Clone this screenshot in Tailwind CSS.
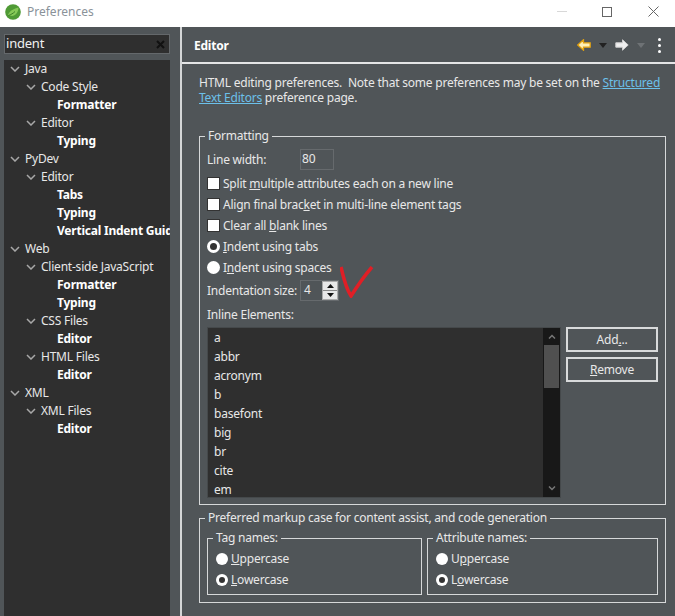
<!DOCTYPE html>
<html lang="en">
<head>
    <meta charset="UTF-8" />
    <title>Preferences</title>
    <script src="https://cdn.jsdelivr.net/npm/@tailwindcss/browser@4"></script>
</head>
<body class="w-[675px] h-[616px] overflow-hidden bg-[#505558] font-['Noto_Sans','Open_Sans',sans-serif] text-[12px] tracking-[-0.22px] text-[#e8e8e8]">

<!-- title bar -->
<header class="h-[27px] bg-white flex items-center pb-[4px]">
    <svg class="ml-[5px] w-4 h-4" viewBox="0 0 16 16">
        <circle cx="8" cy="8" r="7.8" fill="#4f9a35"/>
        <path d="M3 11 C5 6 9 5 13.5 3.5 C13.5 9 9 13.5 5 11.5 Z" fill="#86c957"/>
        <path d="M3.5 11.5 C6 10.5 8 9.5 10 7.5" stroke="#3c7f28" fill="none"/>
    </svg>
    <span class="ml-[6px] text-[#8a9299] tracking-normal">Preferences</span>
    <div class="ml-auto flex items-center">
        <span class="w-[10px] h-px bg-[#d8d8d8] mr-[35px]"></span>
        <span class="w-[10px] h-[10px] border border-[#666] mr-[36px]"></span>
        <svg class="w-[11px] h-[11px] mr-[16px]" viewBox="0 0 11 11"><path d="M.5 .5 10.5 10.5M10.5 .5 .5 10.5" stroke="#666" fill="none"/></svg>
    </div>
</header>

<div class="flex h-[589px]">
    <!-- left: filter and tree -->
    <aside class="w-[180px] shrink-0 pl-1 pr-[10px] pt-[7px]">
        <div class="h-[20px] border border-[#64686b] bg-[#2f2f2f] flex items-center pl-[1px] pr-[4px] text-[13px] text-[#f0f0f0]">
            <span>indent</span>
            <svg class="ml-auto w-[9px] h-[9px]" viewBox="0 0 9 9"><path d="M1 1 8 8M8 1 1 8" stroke="#111" stroke-width="2" fill="none"/></svg>
        </div>
        <div class="mt-[6px] h-[556px] bg-[#2f2f2f] overflow-hidden whitespace-nowrap">
            <div class="h-[18px] flex items-center pl-[6px] gap-[5px]"><svg class="w-[10px] h-[6px] shrink-0" viewBox="0 0 10 6"><path d="M1 1 5 5 9 1" stroke="#a8a8a8" stroke-width="1.5" fill="none"/></svg>Java</div>
            <div class="h-[18px] flex items-center pl-[22px] gap-[5px]"><svg class="w-[10px] h-[6px] shrink-0" viewBox="0 0 10 6"><path d="M1 1 5 5 9 1" stroke="#a8a8a8" stroke-width="1.5" fill="none"/></svg>Code Style</div>
            <div class="h-[18px] flex items-center pl-[53px] font-bold text-white">Formatter</div>
            <div class="h-[18px] flex items-center pl-[22px] gap-[5px]"><svg class="w-[10px] h-[6px] shrink-0" viewBox="0 0 10 6"><path d="M1 1 5 5 9 1" stroke="#a8a8a8" stroke-width="1.5" fill="none"/></svg>Editor</div>
            <div class="h-[18px] flex items-center pl-[53px] font-bold text-white">Typing</div>
            <div class="h-[18px] flex items-center pl-[6px] gap-[5px]"><svg class="w-[10px] h-[6px] shrink-0" viewBox="0 0 10 6"><path d="M1 1 5 5 9 1" stroke="#a8a8a8" stroke-width="1.5" fill="none"/></svg>PyDev</div>
            <div class="h-[18px] flex items-center pl-[22px] gap-[5px]"><svg class="w-[10px] h-[6px] shrink-0" viewBox="0 0 10 6"><path d="M1 1 5 5 9 1" stroke="#a8a8a8" stroke-width="1.5" fill="none"/></svg>Editor</div>
            <div class="h-[18px] flex items-center pl-[53px] font-bold text-white">Tabs</div>
            <div class="h-[18px] flex items-center pl-[53px] font-bold text-white">Typing</div>
            <div class="h-[18px] flex items-center pl-[53px] font-bold text-white">Vertical Indent Guides</div>
            <div class="h-[18px] flex items-center pl-[6px] gap-[5px]"><svg class="w-[10px] h-[6px] shrink-0" viewBox="0 0 10 6"><path d="M1 1 5 5 9 1" stroke="#a8a8a8" stroke-width="1.5" fill="none"/></svg>Web</div>
            <div class="h-[18px] flex items-center pl-[22px] gap-[5px]"><svg class="w-[10px] h-[6px] shrink-0" viewBox="0 0 10 6"><path d="M1 1 5 5 9 1" stroke="#a8a8a8" stroke-width="1.5" fill="none"/></svg>Client-side JavaScript</div>
            <div class="h-[18px] flex items-center pl-[53px] font-bold text-white">Formatter</div>
            <div class="h-[18px] flex items-center pl-[53px] font-bold text-white">Typing</div>
            <div class="h-[18px] flex items-center pl-[22px] gap-[5px]"><svg class="w-[10px] h-[6px] shrink-0" viewBox="0 0 10 6"><path d="M1 1 5 5 9 1" stroke="#a8a8a8" stroke-width="1.5" fill="none"/></svg>CSS Files</div>
            <div class="h-[18px] flex items-center pl-[53px] font-bold text-white">Editor</div>
            <div class="h-[18px] flex items-center pl-[22px] gap-[5px]"><svg class="w-[10px] h-[6px] shrink-0" viewBox="0 0 10 6"><path d="M1 1 5 5 9 1" stroke="#a8a8a8" stroke-width="1.5" fill="none"/></svg>HTML Files</div>
            <div class="h-[18px] flex items-center pl-[53px] font-bold text-white">Editor</div>
            <div class="h-[18px] flex items-center pl-[6px] gap-[5px]"><svg class="w-[10px] h-[6px] shrink-0" viewBox="0 0 10 6"><path d="M1 1 5 5 9 1" stroke="#a8a8a8" stroke-width="1.5" fill="none"/></svg>XML</div>
            <div class="h-[18px] flex items-center pl-[22px] gap-[5px]"><svg class="w-[10px] h-[6px] shrink-0" viewBox="0 0 10 6"><path d="M1 1 5 5 9 1" stroke="#a8a8a8" stroke-width="1.5" fill="none"/></svg>XML Files</div>
            <div class="h-[18px] flex items-center pl-[53px] font-bold text-white">Editor</div>
        </div>
    </aside>

    <!-- sash -->
    <div class="w-[2px] shrink-0 bg-[#d4d6d7]"></div>

    <!-- right: page -->
    <main class="relative flex-1 min-w-0">
        <div class="h-[35px] pt-[1px] flex items-center pl-3 pr-[14px]">
            <span class="mt-[2px] font-bold text-white">Editor</span>
            <svg class="ml-auto w-[14px] h-[12px]" viewBox="0 0 14 12"><path d="M6.5 .8 .8 6 6.5 11.2V8.2H13.2V3.8H6.5Z" fill="#fff0b8" stroke="#e0a010" stroke-width="1.3"/></svg>
            <svg class="ml-[8px] w-[8px] h-[5px]" viewBox="0 0 8 5"><path d="M0 0H8L4 5Z" fill="#222"/></svg>
            <svg class="ml-[8px] w-[14px] h-[12px]" viewBox="0 0 14 12"><path d="M7.5 .8 13.2 6 7.5 11.2V8.2H.8V3.8H7.5Z" fill="#f0f0f0" stroke="#d0d0d0" stroke-width="1"/></svg>
            <svg class="ml-[8px] w-[8px] h-[5px]" viewBox="0 0 8 5"><path d="M0 0H8L4 5Z" fill="#6e7275"/></svg>
            <span class="ml-[13px] flex flex-col gap-[3px]">
                <span class="w-[3px] h-[3px] rounded-full bg-white"></span>
                <span class="w-[3px] h-[3px] rounded-full bg-white"></span>
                <span class="w-[3px] h-[3px] rounded-full bg-white"></span>
            </span>
        </div>
        <div class="h-[2px] bg-[#e4e5e6]"></div>

        <div class="pl-[17px] pr-[9px]">
            <p class="pt-[11px] leading-[15px] h-[64px]">HTML editing preferences.&nbsp; Note that some preferences may be set on the <a class="text-[#6cc0ea] underline">Structured Text Editors</a> preference page.</p>

            <fieldset class="border border-[#d6d8d9] pl-[7px] pr-[7px] h-[377px] block">
                <legend class="ml-[-2px] px-[3px] leading-[16px]">Formatting</legend>
                <div class="h-[21px] mt-[5px] flex items-center">
                    <span class="w-[93px]">Line width:</span>
                    <span class="w-[34px] h-[21px] border border-[#666a6d] pl-[1px] text-[#e8e8e8] leading-[17px]">80</span>
                </div>
                <div class="h-[21px] mt-[3px] flex items-center gap-[3px]"><span class="w-[13px] h-[13px] bg-white border border-[#333]"></span><span>Split <u>m</u>ultiple attributes each on a new line</span></div>
                <div class="h-[21px] flex items-center gap-[3px]"><span class="w-[13px] h-[13px] bg-white border border-[#333]"></span><span>Align final brac<u>k</u>et in multi-line element tags</span></div>
                <div class="h-[21px] flex items-center gap-[3px]"><span class="w-[13px] h-[13px] bg-white border border-[#333]"></span><span>Clear all <u>b</u>lank lines</span></div>
                <div class="h-[21px] flex items-center gap-[3px]"><span class="w-[13px] h-[13px] rounded-full bg-white flex items-center justify-center"><span class="w-[7px] h-[7px] rounded-full bg-[#333]"></span></span><span><u>I</u>ndent using tabs</span></div>
                <div class="h-[21px] flex items-center gap-[3px]"><span class="w-[13px] h-[13px] rounded-full bg-white"></span><span>I<u>n</u>dent using spaces</span></div>
                <div class="h-[21px] mt-[2px] flex items-center">
                    <span class="w-[93px] whitespace-nowrap">Indentation size:</span>
                    <span class="w-[39px] h-[21px] border border-[#666a6d] pl-[3px] leading-[17px] flex">
                        4
                        <span class="ml-auto flex flex-col w-[16px] h-[19px] bg-white border border-[#aaa]">
                            <span class="flex-1 bg-[#e8e8e8] border-b border-[#888] flex items-center justify-center"><svg class="w-[7px] h-[4px]" viewBox="0 0 7 4"><path d="M0 4H7L3.5 0Z" fill="#111"/></svg></span>
                            <span class="flex-1 bg-[#e8e8e8] flex items-center justify-center"><svg class="w-[7px] h-[4px]" viewBox="0 0 7 4"><path d="M0 0H7L3.5 4Z" fill="#111"/></svg></span>
                        </span>
                    </span>
                </div>
                <div class="h-[16px] mt-[6px] leading-[16px]">Inline Elements:</div>

                <div class="mt-[4px] flex items-start gap-[5px]">
                    <div class="w-[354px] h-[171px] border border-[#45494b] bg-[#2f2f2f] flex overflow-hidden">
                        <ul class="flex-1 pl-[6px]">
                            <li class="h-[19px] leading-[19px]">a</li>
                            <li class="h-[19px] leading-[19px]">abbr</li>
                            <li class="h-[19px] leading-[19px]">acronym</li>
                            <li class="h-[19px] leading-[19px]">b</li>
                            <li class="h-[19px] leading-[19px]">basefont</li>
                            <li class="h-[19px] leading-[19px]">big</li>
                            <li class="h-[19px] leading-[19px]">br</li>
                            <li class="h-[19px] leading-[19px]">cite</li>
                            <li class="h-[19px] leading-[19px]">em</li>
                        </ul>
                        <div class="w-[17px] bg-[#181818] flex flex-col items-center">
                            <svg class="mt-[6px] w-[8px] h-[5px]" viewBox="0 0 8 5"><path d="M1 4.5 4 1.5 7 4.5" stroke="#777" stroke-width="1.5" fill="none"/></svg>
                            <div class="mt-[6px] w-[15px] h-[43px] bg-[#505050]"></div>
                            <svg class="mt-auto mb-[6px] w-[8px] h-[5px]" viewBox="0 0 8 5"><path d="M1 .5 4 3.5 7 .5" stroke="#777" stroke-width="1.5" fill="none"/></svg>
                        </div>
                    </div>
                    <div class="flex flex-col gap-[5px] w-[92px]">
                        <div class="h-[25px] border-2 border-[#d8dadb] flex items-center justify-center"><span>Add<u>.</u>..</span></div>
                        <div class="h-[25px] border-2 border-[#d8dadb] flex items-center justify-center"><span><u>R</u>emove</span></div>
                    </div>
                </div>
            </fieldset>

            <fieldset class="mt-[5px] border border-[#d6d8d9] pl-[7px] pr-[7px] h-[93px] block">
                <legend class="ml-[-2px] px-[3px] leading-[16px]">Preferred markup case for content assist, and code generation</legend>
                <div class="flex gap-[5px] mt-[5px]">
                    <fieldset class="w-[215px] h-[64px] border border-[#d6d8d9] pl-[8px]">
                        <legend class="ml-[-3px] px-[3px] leading-[14px]">Tag names:</legend>
                        <div class="h-[21px] mt-[3px] flex items-center gap-[3px]"><span class="w-[12px] h-[12px] rounded-full bg-white"></span><span><u>U</u>ppercase</span></div>
                        <div class="h-[21px] flex items-center gap-[3px]"><span class="w-[12px] h-[12px] rounded-full bg-white flex items-center justify-center"><span class="w-[6px] h-[6px] rounded-full bg-[#333]"></span></span><span><u>L</u>owercase</span></div>
                    </fieldset>
                    <fieldset class="w-[231px] h-[64px] border border-[#d6d8d9] pl-[8px]">
                        <legend class="ml-[-3px] px-[3px] leading-[14px]">Attribute names:</legend>
                        <div class="h-[21px] mt-[3px] flex items-center gap-[3px]"><span class="w-[12px] h-[12px] rounded-full bg-white"></span><span>U<u>p</u>percase</span></div>
                        <div class="h-[21px] flex items-center gap-[3px]"><span class="w-[12px] h-[12px] rounded-full bg-white flex items-center justify-center"><span class="w-[6px] h-[6px] rounded-full bg-[#333]"></span></span><span>L<u>o</u>wercase</span></div>
                    </fieldset>
                </div>
            </fieldset>
        </div>

        <!-- red hand-drawn check mark over the form -->
        <svg class="absolute left-[158px] top-[239px] w-[34px] h-[32px]" viewBox="0 0 34 32"><path d="M1 1C3 10 7 24 11 30 16 22 26 8 32 1" stroke="#e01f26" stroke-width="3.5" fill="none"/></svg>
    </main>
</div>
</body>
</html>
